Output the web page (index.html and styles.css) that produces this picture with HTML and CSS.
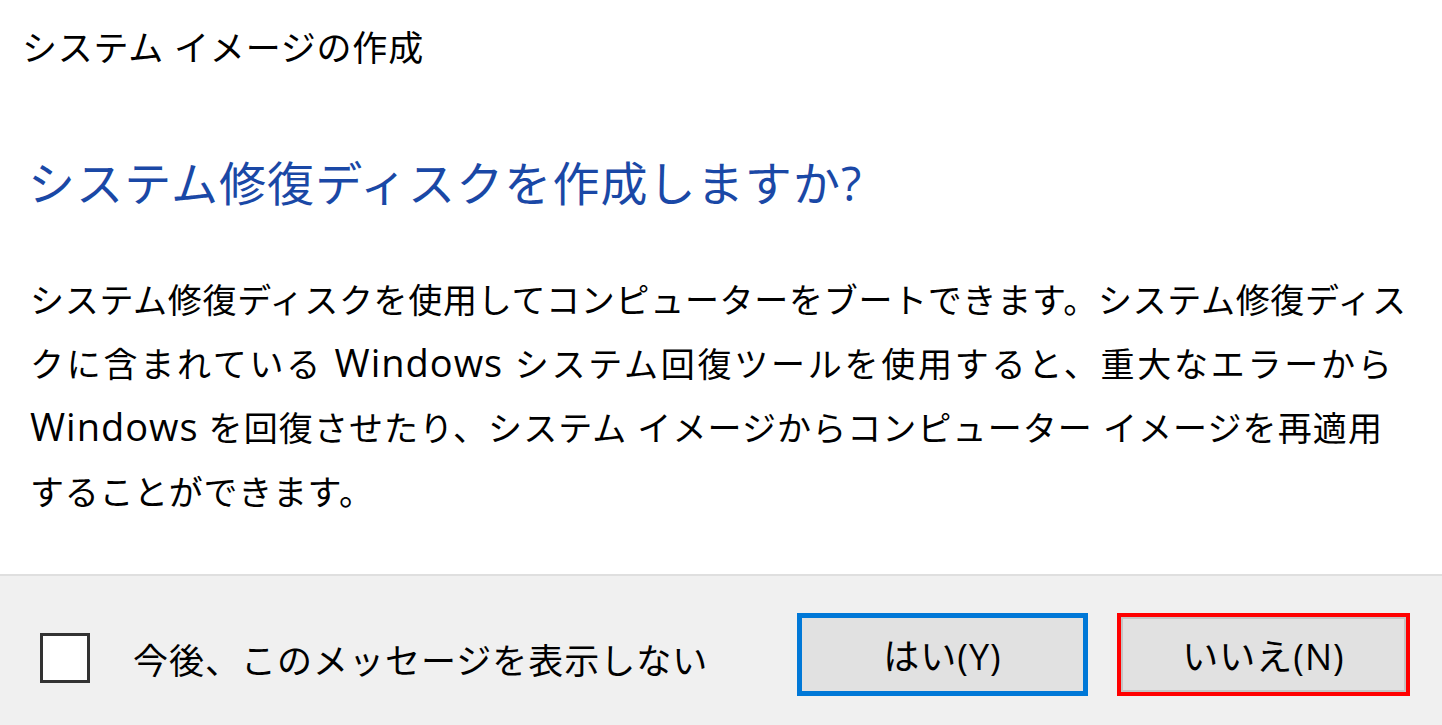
FILE: index.html
```html
<!DOCTYPE html>
<html lang="ja">
<head>
    <meta charset="UTF-8">
    <meta name="viewport" content="width=device-width, initial-scale=1.0">
    <title>システム イメージの作成</title>
    <link rel="stylesheet" href="styles.css">
</head>
<body>
    <div class="dialog">
        <div class="content">
            <div class="title">システム イメージの作成</div>
            <h1 class="instruction">システム修復ディスクを作成しますか?</h1>
            <p class="message">
                <span class="line">システム修復ディスクを使用してコンピューターをブートできます。システム修復ディス</span>
                <span class="line line-wide">クに含まれている <span class="latin">Windows</span> システム回復ツールを使用すると、重大なエラーから</span>
                <span class="line line-mid"><span class="latin">Windows</span> を回復させたり、システム イメージからコンピューター イメージを再適用</span>
                <span class="line">することができます。</span>
            </p>
        </div>
        <div class="footer">
            <label class="check">
                <span class="box"></span>
                <span class="check-label">今後、このメッセージを表示しない</span>
            </label>
            <div class="buttons">
                <button class="btn btn-default">はい(Y)</button>
                <button class="btn btn-marked">いいえ(N)</button>
            </div>
        </div>
    </div>
</body>
</html>
```

FILE: styles.css
```css
body {
    margin: 0;
    background: #ffffff;
    font-family: "Open Sans", "Noto Sans CJK JP", sans-serif;
    color: #000000;
}

.dialog {
    display: flex;
    flex-direction: column;
    height: 100vh;
}

.content {
    flex: 1;
    padding: 27px 20px 0 22px;
}

.title {
    font-size: 35px;
    line-height: 42px;
    letter-spacing: 0.8px;
    white-space: nowrap;
}

.instruction {
    margin: 86px 0 0 6px;
    font-size: 47px;
    line-height: 56px;
    font-weight: normal;
    letter-spacing: 1.1px;
    color: #1a48a6;
    white-space: nowrap;
}

.message {
    margin: 57px 0 0 8px;
    font-size: 34px;
    line-height: 64px;
    letter-spacing: 0.7px;
    white-space: nowrap;
}

.line {
    display: block;
}

.line-wide {
    letter-spacing: 2.75px;
}

.line-mid {
    letter-spacing: 1.1px;
}

.latin {
    font-size: 38px;
    letter-spacing: 1px;
    line-height: 1;
}

.footer {
    height: 141px;
    padding: 8px 32px 0 40px;
    display: flex;
    align-items: center;
    background: #f0f0f0;
    border-top: 2px solid #dfdfdf;
}

.check {
    display: flex;
    align-items: center;
    margin-top: 7px;
    flex: 1;
}

.box {
    width: 44px;
    height: 44px;
    background: #ffffff;
    border: 3px solid #333333;
}

.check-label {
    margin-left: 43px;
    font-size: 35px;
    letter-spacing: 1px;
    white-space: nowrap;
}

.buttons {
    display: flex;
    gap: 29px;
}

.btn {
    height: 83px;
    background: #e1e1e1;
    font-family: inherit;
    font-size: 36px;
    letter-spacing: 1px;
    color: #000000;
    padding: 0;
}

.btn-default {
    width: 291px;
    border: 5px solid #0078d7;
}

.btn-marked {
    width: 293px;
    border: 4px solid #ff0000;
    box-shadow: inset 0 0 0 2px #c4c4c4;
}
```
